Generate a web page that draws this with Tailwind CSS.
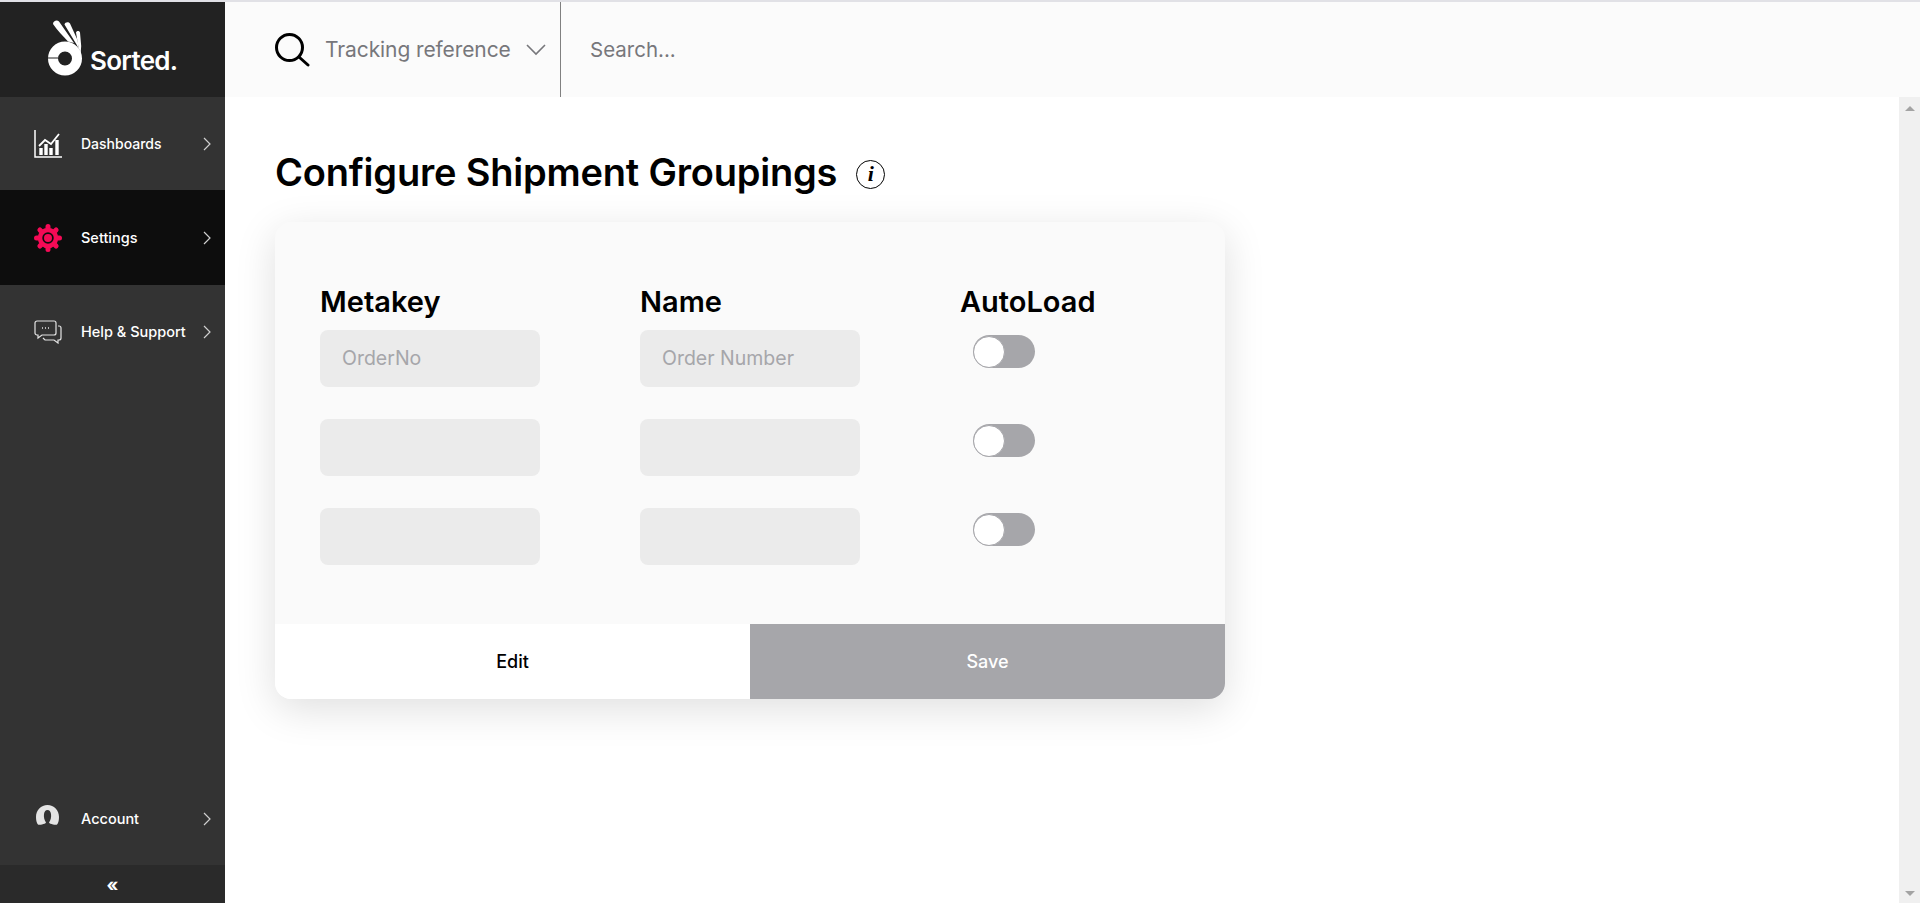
<!DOCTYPE html>
<html lang="en">
<head>
<meta charset="utf-8">
<title>Configure Shipment Groupings</title>
<script src="https://cdn.jsdelivr.net/npm/@tailwindcss/browser@4"></script>
</head>
<body class="h-[903px] w-[1920px] overflow-hidden bg-white font-['Inter','Liberation_Sans',sans-serif]">
<div class="flex h-full flex-col">
  <div class="h-[2px] shrink-0 bg-[#e1e1e6]"></div>
  <div class="flex min-h-0 flex-1">
    <aside class="flex w-[225px] shrink-0 flex-col bg-[#333333] text-white">
      <div class="flex h-[95px] shrink-0 items-start bg-[#222222] pl-[48px] pt-[18px]">
        <svg width="34" height="56" viewBox="0 0 34 56" fill="none" aria-label="Sorted logo" class="shrink-0">
          <path d="M5 4C5 1 9 -0.500 11 1.500L26 23C24 22.500 22 22 20 21.500C15 16 9 10 5 4Z" fill="#fff"/>
          <path d="M16.500 4.500C17 2 20.500 1.500 22 3.500L29.500 20L31.500 32C30.500 28 29 25 27 22Z" fill="#fff"/>
          <path d="M28 12.500C28.500 10.500 31.500 10.500 32 12.500L33.200 26L32.300 38C32 33 31.500 30 30.400 26.500Z" fill="#fff"/>
          <circle cx="17" cy="38.500" r="12" stroke="#fff" stroke-width="10"/>
          <rect x="0" y="37.500" width="10" height="1" fill="#222222"/>
        </svg>
        <span class="ml-[8px] mt-[23px] text-[26px] font-semibold leading-[36px] tracking-[-0.7px]">Sorted.</span>
      </div>

      <a class="flex h-[93px] shrink-0 items-center bg-[#333333] pl-[34px] pr-[14px]">
        <svg width="28" height="28" viewBox="0 0 28 28" fill="none" stroke="#fff" class="shrink-0">
          <path d="M1 0V27H28" stroke-width="1.500"/>
          <path d="M5 16 L11 10 L17 14 L25 4" stroke-width="1.800"/>
          <path d="M7 25V18M12 25V14M17 25V18M23 25V10" stroke-width="3.400"/>
        </svg>
        <span class="ml-[19px] flex-1 text-[14px] font-medium">Dashboards</span>
        <svg width="8" height="14" viewBox="0 0 8 14" fill="none" stroke="#d0d0d0" stroke-width="1.200"><path d="M1 1l6 6-6 6"/></svg>
      </a>

      <a class="flex h-[95px] shrink-0 items-center bg-[#0d0d0d] pl-[34px] pr-[14px]">
        <svg width="28" height="28" viewBox="0 0 28 28" class="shrink-0" fill="none">
          <g stroke="#f50a56" stroke-width="5" stroke-linecap="round">
            <path d="M14 2.500V25.500M2.500 14H25.500M5.900 5.900L22.100 22.100M22.100 5.900L5.900 22.100"/>
          </g>
          <circle cx="14" cy="14" r="8" fill="#0d0d0d" stroke="#f50a56" stroke-width="4.500"/>
          <circle cx="14" cy="14" r="4" fill="#f50a56"/>
        </svg>
        <span class="ml-[19px] flex-1 text-[14.500px] font-medium">Settings</span>
        <svg width="8" height="14" viewBox="0 0 8 14" fill="none" stroke="#d0d0d0" stroke-width="1.200"><path d="M1 1l6 6-6 6"/></svg>
      </a>

      <a class="flex h-[93px] shrink-0 items-center bg-[#333333] pl-[34px] pr-[14px]">
        <svg width="28" height="24" viewBox="0 0 28 24" fill="none" stroke="#e4e4e4" stroke-width="1.200" class="shrink-0">
          <path d="M3 1H20a2 2 0 0 1 2 2V13a2 2 0 0 1-2 2H8L4 18V15H3a2 2 0 0 1-2-2V3a2 2 0 0 1 2-2Z"/>
          <path d="M24 6h1a2 2 0 0 1 2 2V18a2 2 0 0 1-2 2H24V23L20 20H11L9 18"/>
          <path d="M8 8h1M11 8h1M14 8h1" stroke-width="1.300"/>
        </svg>
        <span class="ml-[19px] flex-1 whitespace-nowrap text-[14.500px] font-medium">Help &amp; Support</span>
        <svg width="8" height="14" viewBox="0 0 8 14" fill="none" stroke="#d0d0d0" stroke-width="1.200"><path d="M1 1l6 6-6 6"/></svg>
      </a>

      <div class="flex-1"></div>

      <a class="flex h-[93px] shrink-0 items-center bg-[#333333] pl-[34px] pr-[14px]">
        <svg width="28" height="24" viewBox="0 0 28 24" class="mt-[-6px] shrink-0">
          <path d="M13.500 1C7 1 2 6 2 13C2 16 2.500 18 3.500 20C4 21 6 21 8 20.500C10 20 11.500 19.500 12 18.500C10.500 16.500 9.500 13 10 10C10.500 7.500 11.500 6 13.500 6C15.500 6 16.500 7.500 17 10C17.500 13 16.500 16.500 15 18.500C15.500 19.500 17 20 19 20.500C21 21 23 21 23.500 20C24.500 18 25 16 25 13C25 6 20 1 13.500 1Z" fill="#e4e4e4"/>
        </svg>
        <span class="ml-[19px] flex-1 text-[14.500px] font-medium">Account</span>
        <svg width="8" height="14" viewBox="0 0 8 14" fill="none" stroke="#d0d0d0" stroke-width="1.200"><path d="M1 1l6 6-6 6"/></svg>
      </a>
      <div class="flex h-[38px] shrink-0 items-center justify-center bg-[#2a2a2a] pt-[2px] text-[18px] font-bold leading-none">«</div>
    </aside>

    <div class="flex min-w-0 flex-1 flex-col">
      <header class="flex h-[95px] shrink-0 items-center bg-[#fbfbfb]">
        <div class="flex h-full w-[336px] shrink-0 items-center border-r border-[#808080] pl-[50px]">
          <svg width="35" height="34" viewBox="0 0 35 34" fill="none" stroke="#000" class="shrink-0">
            <circle cx="14.500" cy="14.500" r="13" stroke-width="3"/>
            <path d="M24 24L33 32" stroke-width="3" stroke-linecap="round"/>
          </svg>
          <span class="ml-[15px] whitespace-nowrap text-[21px] tracking-[-0.1px] text-[#77777b]">Tracking reference</span>
          <svg width="20" height="12" viewBox="0 0 20 12" fill="none" stroke="#77777b" stroke-width="1.600" class="ml-[15px] shrink-0"><path d="M1 1l9 9 9-9"/></svg>
        </div>
        <span class="ml-[29px] mt-[2px] text-[20.500px] text-[#77777b]">Search...</span>
      </header>

      <div class="flex min-h-0 flex-1">
        <main class="min-w-0 flex-1 pl-[50px]">
          <div class="mt-[55px] flex h-[40px] items-center">
            <h1 class="whitespace-nowrap text-[38px] font-semibold leading-none tracking-[-0.2px] text-black">Configure Shipment Groupings</h1>
            <span class="ml-[19px] mt-[4px] flex size-[29px] items-center justify-center rounded-full border border-black font-['Liberation_Serif',serif] text-[22px] font-bold italic leading-none text-black">i</span>
          </div>

          <section class="mt-[30px] flex h-[477px] w-[950px] flex-col overflow-hidden rounded-2xl bg-[#fafafa] shadow-[0_10px_40px_rgba(0,0,0,0.13)]">
            <div class="flex-1 pl-[45px] pt-[62px]">
              <div class="grid grid-cols-[320px_320px_auto] text-[29px] font-semibold leading-[36px] text-black">
                <div>Metakey</div>
                <div>Name</div>
                <div>AutoLoad</div>
              </div>
              <div class="mt-[10px] grid grid-cols-[320px_320px_auto] gap-y-[32px] text-[19.500px] text-[#a6a6aa]">
                <div class="flex h-[57px] w-[220px] items-center rounded-lg bg-[#ebebeb] pl-[22px] pt-[1px]">OrderNo</div>
                <div class="flex h-[57px] w-[220px] items-center rounded-lg bg-[#ebebeb] pl-[22px] pt-[1px]">Order Number</div>
                <div class="pl-[13px] pt-[5px]"><div class="flex h-[33px] w-[62px] items-center rounded-full bg-[#a6a6aa]"><div class="size-[32px] rounded-full border border-[#a6a6aa] bg-white"></div></div></div>
                <div class="h-[57px] w-[220px] rounded-lg bg-[#ebebeb]"></div>
                <div class="h-[57px] w-[220px] rounded-lg bg-[#ebebeb]"></div>
                <div class="pl-[13px] pt-[5px]"><div class="flex h-[33px] w-[62px] items-center rounded-full bg-[#a6a6aa]"><div class="size-[32px] rounded-full border border-[#a6a6aa] bg-white"></div></div></div>
                <div class="h-[57px] w-[220px] rounded-lg bg-[#ebebeb]"></div>
                <div class="h-[57px] w-[220px] rounded-lg bg-[#ebebeb]"></div>
                <div class="pl-[13px] pt-[5px]"><div class="flex h-[33px] w-[62px] items-center rounded-full bg-[#a6a6aa]"><div class="size-[32px] rounded-full border border-[#a6a6aa] bg-white"></div></div></div>
              </div>
            </div>
            <div class="grid h-[75px] shrink-0 grid-cols-2 text-[18px] font-medium">
              <button class="bg-white text-black">Edit</button>
              <button class="bg-[#a6a6aa] text-white">Save</button>
            </div>
          </section>
        </main>

        <div class="flex w-[21px] shrink-0 flex-col items-center justify-between bg-[#f0f0f0] pb-[7px] pt-[9px]">
          <div class="h-0 w-0 border-x-[5px] border-b-[5px] border-x-transparent border-b-[#a3a3a3]"></div>
          <div class="h-0 w-0 border-x-[5px] border-t-[5px] border-x-transparent border-t-[#a3a3a3]"></div>
        </div>
      </div>
    </div>
  </div>
</div>
</body>
</html>
